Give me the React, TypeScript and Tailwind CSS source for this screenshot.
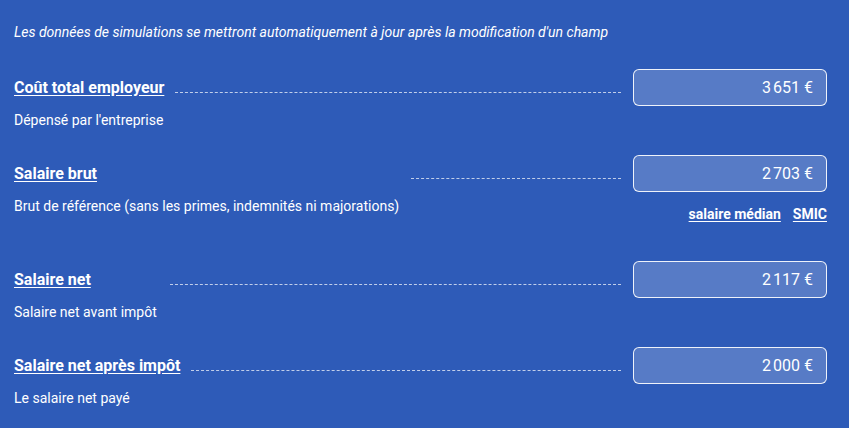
import React from "react";

interface Field {
  title: string;
  subtitle: string;
  value: string;
  lineStart: string;
  links?: boolean;
  gap: string;
}

const fields: Field[] = [
  { title: "Coût total employeur", subtitle: "Dépensé par l'entreprise", value: "3\u202f651 €", lineStart: "ml-[11px]", gap: "mt-[28px]" },
  { title: "Salaire brut", subtitle: "Brut de référence (sans les primes, indemnités ni majorations)", value: "2\u202f703 €", lineStart: "ml-[314px]", links: true, gap: "mt-[26px]" },
  { title: "Salaire net", subtitle: "Salaire net avant impôt", value: "2\u202f117 €", lineStart: "ml-[79px]", gap: "mt-[38px]" },
  { title: "Salaire net après impôt", subtitle: "Le salaire net payé", value: "2\u202f000 €", lineStart: "ml-[11px]", gap: "mt-[26px]" },
];

export default function App() {
  return (
    <div
      className="w-[849px] h-[428px] overflow-hidden bg-[#2e5bb8] text-white pl-[14px] pr-[22px] pt-[23px]"
      style={{ fontFamily: "Roboto, 'Noto Sans', sans-serif" }}
    >
      <p className="italic text-[14px] leading-[18px]">
        Les données de simulations se mettront automatiquement à jour après la modification d'un champ
      </p>

      {fields.map((f) => (
        <div key={f.title} className={`flex ${f.gap}`}>
          <div className="flex-1 flex flex-col">
            <div className="h-[37px] flex items-center">
              <span className="font-bold text-[16px] underline underline-offset-2 whitespace-nowrap">{f.title}</span>
              <div className={`flex-1 mt-[10px] border-t border-dashed border-white/70 ${f.lineStart}`} />
            </div>
            <div className="mt-[5px] text-[14px] leading-[18px]">{f.subtitle}</div>
          </div>
          <div className="ml-[12px] flex flex-col items-end">
            <div className="w-[194px] h-[37px] rounded-[6px] border border-white/90 bg-white/20 flex items-center justify-end pr-[13px] text-[16px]">
              {f.value}
            </div>
            {f.links && (
              <div className="mt-[13px] flex gap-[12px] text-[14px] leading-[18px] font-bold">
                <span className="underline underline-offset-2">salaire médian</span>
                <span className="underline underline-offset-2">SMIC</span>
              </div>
            )}
          </div>
        </div>
      ))}
    </div>
  );
}
